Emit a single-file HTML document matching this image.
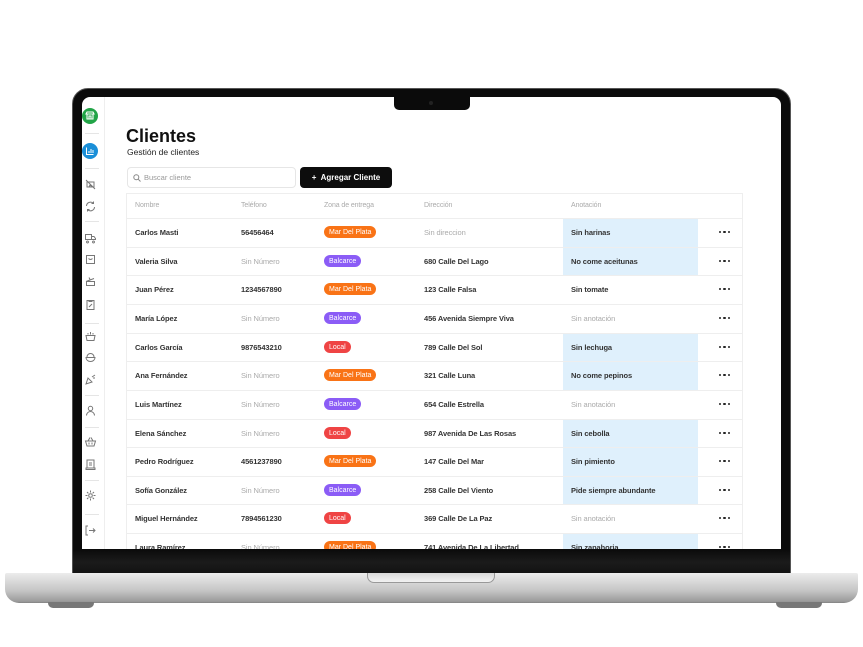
<!DOCTYPE html>
<html><head><meta charset="utf-8"><style>
*{margin:0;padding:0;box-sizing:border-box}
body{width:863px;height:647px;background:#fff;position:relative;overflow:hidden;font-family:"Liberation Sans",sans-serif;color:#111}
.abs{position:absolute}
.bezel{left:72px;top:88px;width:719px;height:487px;background:#0b0b0b;border-radius:16px 16px 0 0;border:1px solid #555}
.screen{left:82px;top:97px;width:699px;height:452px;background:#fff;border-radius:8px 8px 0 0;overflow:hidden}
.chin{left:73px;top:549px;width:717px;height:26px;background:linear-gradient(#0a0a0a,#1b1b1b 50%,#111)}
.base{left:5px;top:573px;width:853px;height:30px;border-radius:2px 2px 14px 14px;background:linear-gradient(#ececec,#d8d8d8 30%,#c4c4c4 60%,#9a9a9a 95%,#808080)}
.notch2{left:367px;top:573px;width:128px;height:10px;background:linear-gradient(#d8d8d8,#f2f2f2);border-radius:0 0 7px 7px;border:1px solid #999;border-top:none}
.foot{top:602px;width:46px;height:6px;border-radius:0 0 5px 5px;background:#777}
.notch{left:312px;top:0;width:76px;height:13px;background:#0b0b0b;border-radius:0 0 5px 5px}
.side{left:0;top:0;width:23px;height:452px;border-right:1px solid #eee}
.sep{position:absolute;left:3px;width:14px;height:1px;background:#e5e5e5}
.ic{position:absolute;left:2px;width:13px;height:13px}
.t{position:absolute;font-size:7.5px;font-weight:bold;color:#333;white-space:nowrap;letter-spacing:-0.1px}
.g{color:#aaa;font-weight:normal}
.pill{position:absolute;height:12px;border-radius:6px;color:#fff;font-size:7px;padding:0 5px;display:flex;align-items:center}
.o{background:#f97316}.p{background:#8b5cf6}.r{background:#ef4444}
.d{position:absolute;left:637px;width:11px;height:3px;display:flex;justify-content:space-between}
.d i{width:2.4px;height:2.4px;border-radius:50%;background:#222}
.row{position:absolute;left:44px;width:617px;height:1px;background:#eee}
.blue{position:absolute;left:481px;width:135px;background:#dff0fc}
</style></head><body>
<div class="abs bezel"></div>
<div class="abs chin"></div>
<div class="abs base"></div>
<div class="abs notch2"></div>
<div class="abs foot" style="left:48px"></div>
<div class="abs foot" style="left:776px"></div>
<div class="abs screen">
 <div class="abs notch"><div style="position:absolute;left:35px;top:4px;width:4px;height:4px;border-radius:2px;background:#222"></div></div>
 <div class="abs side">
  <div style="position:absolute;left:0;top:11px;width:16px;height:16px;border-radius:8px;background:#22a447"><svg width="16" height="16" viewBox="0 0 16 16" fill="none" stroke="#fff" stroke-width="1.1"><path d="M4 6h8l-1-2H5zM5 6v5h6V6M7 11V8h2v3"/></svg></div>
  <div class="sep" style="top:36px"></div>
  <div style="position:absolute;left:0;top:46px;width:16px;height:16px;border-radius:8px;background:#1a8fd8"><svg width="16" height="16" viewBox="0 0 16 16" fill="none" stroke="#fff" stroke-width="1"><path d="M4.5 4.5v7h7M7 10V8M9 10V6M11 10V7"/></svg></div>
  <div class="sep" style="top:71px"></div>
  <svg class="ic" style="top:81px" viewBox="0 0 13 13" fill="none" stroke="#777" stroke-width="1"><path d="M2 2l9 9M3 4h7v5H3zM5 9l1-2 2 2"/></svg>
  <svg class="ic" style="top:103px" viewBox="0 0 13 13" fill="none" stroke="#777" stroke-width="1"><path d="M2.5 6a4 4 0 0 1 7-2.5M10.5 7a4 4 0 0 1-7 2.5M9.5 1.5v2h-2M3.5 11.5v-2h2"/></svg>
  <div class="sep" style="top:124px"></div>
  <svg class="ic" style="top:134px" viewBox="0 0 13 13" fill="none" stroke="#777" stroke-width="1"><path d="M1.5 3.5h6v5h-6zM7.5 5.5h2.5l1.5 2v1h-4M3.5 10a1 1 0 1 0 .01 0M9.5 10a1 1 0 1 0 .01 0"/></svg>
  <svg class="ic" style="top:156px" viewBox="0 0 13 13" fill="none" stroke="#777" stroke-width="1"><path d="M2.5 2.5h8v8h-8zM4.5 5.5q2 2 4 0"/></svg>
  <svg class="ic" style="top:178px" viewBox="0 0 13 13" fill="none" stroke="#777" stroke-width="1"><path d="M2.5 6.5h8v4h-8zM2 6.5l8-3M6 4.5l-1-2"/></svg>
  <svg class="ic" style="top:201px" viewBox="0 0 13 13" fill="none" stroke="#777" stroke-width="1"><path d="M3 2.5h7v9H3zM5 2v1.5h3V2M5 9l3-3"/></svg>
  <div class="sep" style="top:226px"></div>
  <svg class="ic" style="top:233px" viewBox="0 0 13 13" fill="none" stroke="#777" stroke-width="1"><path d="M2 5.5h9l-1 5H3zM4 3v1.5M6.5 2v2.5M9 3v1.5"/></svg>
  <svg class="ic" style="top:254px" viewBox="0 0 13 13" fill="none" stroke="#777" stroke-width="1"><path d="M2 6.5h9a4.5 4 0 0 1-9 0zM3 6a3.5 3.5 0 0 1 7 0"/></svg>
  <svg class="ic" style="top:276px" viewBox="0 0 13 13" fill="none" stroke="#777" stroke-width="1"><path d="M2 11l2-6 4 4zM8 4l3-2M9 5l2 0"/></svg>
  <div class="sep" style="top:298px"></div>
  <svg class="ic" style="top:307px" viewBox="0 0 13 13" fill="none" stroke="#777" stroke-width="1"><circle cx="6.5" cy="4.5" r="2.2"/><path d="M2.5 11.5a4 4 0 0 1 8 0"/></svg>
  <div class="sep" style="top:330px"></div>
  <svg class="ic" style="top:338px" viewBox="0 0 13 13" fill="none" stroke="#777" stroke-width="1"><path d="M1.5 6h10l-1.5 5h-7zM4 6l2-3.5M9 6L7 2.5M5 7.5v2M8 7.5v2"/></svg>
  <svg class="ic" style="top:361px" viewBox="0 0 13 13" fill="none" stroke="#777" stroke-width="1"><path d="M3 2h7v8H3zM2 10h9v1.5H2zM5 5h3M5 7h3"/></svg>
  <div class="sep" style="top:383px"></div>
  <svg class="ic" style="top:392px" viewBox="0 0 13 13" fill="none" stroke="#777" stroke-width="1"><circle cx="6.5" cy="6.5" r="1.8"/><path d="M6.5 1.5v2M6.5 9.5v2M1.5 6.5h2M9.5 6.5h2M3 3l1.4 1.4M8.6 8.6L10 10M3 10l1.4-1.4M8.6 4.4L10 3"/></svg>
  <div class="sep" style="top:417px"></div>
  <svg class="ic" style="top:427px" viewBox="0 0 13 13" fill="none" stroke="#777" stroke-width="1"><path d="M4 2H2v9h2M5 6.5h6M9 4.5l2 2-2 2"/></svg>
 </div>
 <div class="abs" style="left:44px;top:29px;font-size:18px;font-weight:bold;color:#111">Clientes</div>
 <div class="abs" style="left:45px;top:50px;font-size:8.5px;color:#222">Gestión de clientes</div>
 <div class="abs" style="left:45px;top:70px;width:169px;height:21px;border:1px solid #e6e6e6;border-radius:4px;font-size:7.5px;color:#999;line-height:19px;padding-left:16px">Buscar cliente
  <svg style="position:absolute;left:5px;top:6px" width="8" height="8" viewBox="0 0 8 8" fill="none" stroke="#888" stroke-width="1"><circle cx="3.3" cy="3.3" r="2.5"/><path d="M5.2 5.2L7.5 7.5"/></svg></div>
 <div class="abs" style="left:218px;top:70px;width:92px;height:21px;background:#0d0d0d;border-radius:4px;color:#fff;font-size:8px;font-weight:bold;line-height:21px;text-align:center">+&nbsp; Agregar Cliente</div>
 <div class="abs" style="left:44px;top:96px;width:617px;height:360px;border:1px solid #eee;border-bottom:none"></div>
 <div class="blue" style="top:121px;height:57px"></div>
 <div class="blue" style="top:236px;height:57px"></div>
 <div class="blue" style="top:322px;height:85px"></div>
 <div class="blue" style="top:436px;height:20px"></div>
 <div class="t g" style="left:53px;top:105px;font-size:7px">Nombre</div>
 <div class="t g" style="left:159px;top:105px;font-size:7px">Teléfono</div>
 <div class="t g" style="left:242px;top:105px;font-size:7px">Zona de entrega</div>
 <div class="t g" style="left:342px;top:105px;font-size:7px">Dirección</div>
 <div class="t g" style="left:489px;top:105px;font-size:7px">Anotación</div>
 <div class="row" style="top:121px"></div><div class="row" style="top:150px"></div><div class="row" style="top:178px"></div><div class="row" style="top:207px"></div><div class="row" style="top:236px"></div><div class="row" style="top:264px"></div><div class="row" style="top:293px"></div><div class="row" style="top:322px"></div><div class="row" style="top:350px"></div><div class="row" style="top:379px"></div><div class="row" style="top:407px"></div><div class="row" style="top:436px"></div>
 <div class="t" style="left:53px;top:131px">Carlos Masti</div><div class="t" style="left:159px;top:131px">56456464</div><div class="pill o" style="left:242px;top:129px">Mar Del Plata</div><div class="t g" style="left:342px;top:131px">Sin direccion</div><div class="t" style="left:489px;top:131px">Sin harinas</div><div class="d" style="top:134px"><i></i><i></i><i></i></div>
 <div class="t" style="left:53px;top:160px">Valeria Silva</div><div class="t g" style="left:159px;top:160px">Sin Número</div><div class="pill p" style="left:242px;top:158px">Balcarce</div><div class="t" style="left:342px;top:160px">680 Calle Del Lago</div><div class="t" style="left:489px;top:160px">No come aceitunas</div><div class="d" style="top:163px"><i></i><i></i><i></i></div>
 <div class="t" style="left:53px;top:188px">Juan Pérez</div><div class="t" style="left:159px;top:188px">1234567890</div><div class="pill o" style="left:242px;top:186px">Mar Del Plata</div><div class="t" style="left:342px;top:188px">123 Calle Falsa</div><div class="t" style="left:489px;top:188px">Sin tomate</div><div class="d" style="top:191px"><i></i><i></i><i></i></div>
 <div class="t" style="left:53px;top:217px">María López</div><div class="t g" style="left:159px;top:217px">Sin Número</div><div class="pill p" style="left:242px;top:215px">Balcarce</div><div class="t" style="left:342px;top:217px">456 Avenida Siempre Viva</div><div class="t g" style="left:489px;top:217px">Sin anotación</div><div class="d" style="top:220px"><i></i><i></i><i></i></div>
 <div class="t" style="left:53px;top:246px">Carlos García</div><div class="t" style="left:159px;top:246px">9876543210</div><div class="pill r" style="left:242px;top:244px">Local</div><div class="t" style="left:342px;top:246px">789 Calle Del Sol</div><div class="t" style="left:489px;top:246px">Sin lechuga</div><div class="d" style="top:249px"><i></i><i></i><i></i></div>
 <div class="t" style="left:53px;top:274px">Ana Fernández</div><div class="t g" style="left:159px;top:274px">Sin Número</div><div class="pill o" style="left:242px;top:272px">Mar Del Plata</div><div class="t" style="left:342px;top:274px">321 Calle Luna</div><div class="t" style="left:489px;top:274px">No come pepinos</div><div class="d" style="top:277px"><i></i><i></i><i></i></div>
 <div class="t" style="left:53px;top:303px">Luis Martínez</div><div class="t g" style="left:159px;top:303px">Sin Número</div><div class="pill p" style="left:242px;top:301px">Balcarce</div><div class="t" style="left:342px;top:303px">654 Calle Estrella</div><div class="t g" style="left:489px;top:303px">Sin anotación</div><div class="d" style="top:306px"><i></i><i></i><i></i></div>
 <div class="t" style="left:53px;top:332px">Elena Sánchez</div><div class="t g" style="left:159px;top:332px">Sin Número</div><div class="pill r" style="left:242px;top:330px">Local</div><div class="t" style="left:342px;top:332px">987 Avenida De Las Rosas</div><div class="t" style="left:489px;top:332px">Sin cebolla</div><div class="d" style="top:335px"><i></i><i></i><i></i></div>
 <div class="t" style="left:53px;top:360px">Pedro Rodríguez</div><div class="t" style="left:159px;top:360px">4561237890</div><div class="pill o" style="left:242px;top:358px">Mar Del Plata</div><div class="t" style="left:342px;top:360px">147 Calle Del Mar</div><div class="t" style="left:489px;top:360px">Sin pimiento</div><div class="d" style="top:363px"><i></i><i></i><i></i></div>
 <div class="t" style="left:53px;top:389px">Sofía González</div><div class="t g" style="left:159px;top:389px">Sin Número</div><div class="pill p" style="left:242px;top:387px">Balcarce</div><div class="t" style="left:342px;top:389px">258 Calle Del Viento</div><div class="t" style="left:489px;top:389px">Pide siempre abundante</div><div class="d" style="top:392px"><i></i><i></i><i></i></div>
 <div class="t" style="left:53px;top:417px">Miguel Hernández</div><div class="t" style="left:159px;top:417px">7894561230</div><div class="pill r" style="left:242px;top:415px">Local</div><div class="t" style="left:342px;top:417px">369 Calle De La Paz</div><div class="t g" style="left:489px;top:417px">Sin anotación</div><div class="d" style="top:420px"><i></i><i></i><i></i></div>
 <div class="t" style="left:53px;top:446px">Laura Ramírez</div><div class="t g" style="left:159px;top:446px">Sin Número</div><div class="pill o" style="left:242px;top:444px">Mar Del Plata</div><div class="t" style="left:342px;top:446px">741 Avenida De La Libertad</div><div class="t" style="left:489px;top:446px">Sin zanahoria</div><div class="d" style="top:449px"><i></i><i></i><i></i></div>
</div>
</body></html>
